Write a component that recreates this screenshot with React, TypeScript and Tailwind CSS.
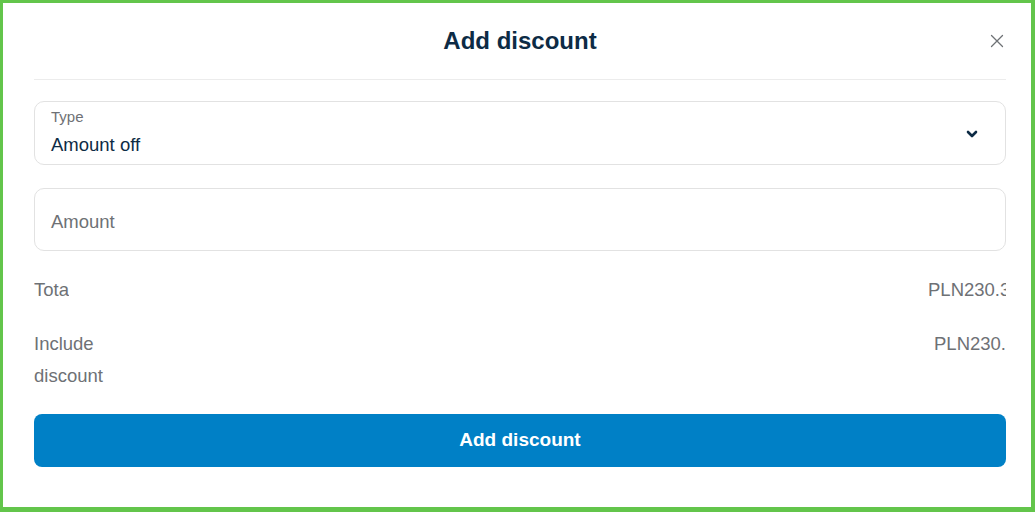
const FONT = { fontFamily: '"Liberation Sans", Arial, sans-serif' };

function Chevron() {
  return (
    <svg width="12" height="8" viewBox="0 0 12 8" className="text-[#0d2b45]">
      <polyline points="2,2 6,6 10,2" fill="none" stroke="currentColor" strokeWidth="2.6" strokeLinecap="round" strokeLinejoin="round" />
    </svg>
  );
}

function CloseIcon() {
  return (
    <svg width="14" height="14" viewBox="0 0 14 14" className="text-[#6e7175]">
      <path d="M1.5 1.5 L12.5 12.5 M12.5 1.5 L1.5 12.5" stroke="currentColor" strokeWidth="1.3" strokeLinecap="round" />
    </svg>
  );
}

export default function App() {
  return (
    <div
      className="w-[1035px] h-[512px] bg-white border-[#63c54b] border-t-[3px] border-l-[3px] border-r-[4px] border-b-[5px]"
      style={FONT}
    >
      <div className="pl-[31px] pr-[25px]">
        {/* Header */}
        <div className="relative h-[77px] flex items-center justify-center border-b border-[#ececec]">
          <h1 className="text-[24px] font-bold text-[#0d2b45] leading-none">Add discount</h1>
          <button className="absolute right-[2px] top-1/2 -translate-y-1/2 flex items-center justify-center">
            <CloseIcon />
          </button>
        </div>

        {/* Type select */}
        <div className="mt-[21px] h-[64px] border border-[#e2e2e2] rounded-[10px] flex items-start justify-between pl-[16px] pr-[27px]">
          <div className="pt-[5px] flex flex-col">
            <span className="text-[15px] leading-[20px] text-[#6e7175]">Type</span>
            <span className="text-[18.5px] leading-[36px] text-[#0d2b45]">Amount off</span>
          </div>
          <div className="self-center pt-[2px]">
            <Chevron />
          </div>
        </div>

        {/* Amount input */}
        <div className="mt-[23px] h-[63px] border border-[#e2e2e2] rounded-[10px] flex items-center pl-[16px] pt-[4px]">
          <span className="text-[18.5px] text-[#6e7175]">Amount</span>
        </div>

        {/* Summary rows */}
        <div className="mt-[23px] flex justify-between text-[18.5px] leading-[32px] text-[#6e7175]">
          <div className="w-[35px] overflow-hidden whitespace-nowrap">Total</div>
          <div className="w-[78px] overflow-hidden whitespace-nowrap">PLN230.37</div>
        </div>
        <div className="mt-[22px] flex justify-between text-[18.5px] leading-[32px] text-[#6e7175]">
          <div className="w-[72px]">Include discount</div>
          <div className="w-[72px] overflow-hidden whitespace-nowrap">PLN230.37</div>
        </div>

        {/* Submit */}
        <button className="mt-[22px] w-full h-[53px] rounded-[8px] bg-[#0080c6] text-white text-[19px] font-bold flex items-center justify-center">
          Add discount
        </button>
      </div>
    </div>
  );
}
